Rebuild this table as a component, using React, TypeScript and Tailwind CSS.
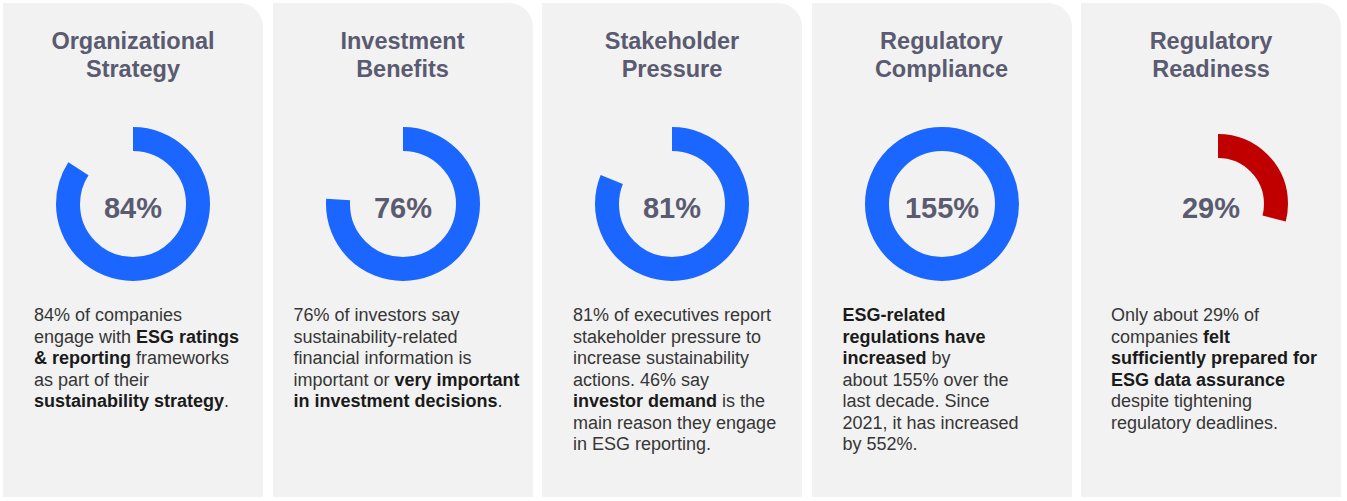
import React from 'react';

type Part = { t: string; b?: boolean };

interface Stat {
  title: [string, string];
  value: string;
  pct: number;
  color: string;
  cx: number;
  r: number;
  padLeft: string;
  lines: Part[][];
}

const stats: Stat[] = [
  {
    title: ['Organizational', 'Strategy'],
    value: '84%',
    pct: 0.84,
    color: '#1a66ff',
    cx: 80,
    r: 65,
    padLeft: 'pl-[31px]',
    lines: [
      [{ t: '84% of companies' }],
      [{ t: 'engage with ' }, { t: 'ESG ratings', b: true }],
      [{ t: '& reporting', b: true }, { t: ' frameworks' }],
      [{ t: 'as part of their' }],
      [{ t: 'sustainability strategy', b: true }, { t: '.' }],
    ],
  },
  {
    title: ['Investment', 'Benefits'],
    value: '76%',
    pct: 0.76,
    color: '#1a66ff',
    cx: 80,
    r: 65,
    padLeft: 'pl-[21px]',
    lines: [
      [{ t: '76% of investors say' }],
      [{ t: 'sustainability-related' }],
      [{ t: 'financial information is' }],
      [{ t: 'important or ' }, { t: 'very important', b: true }],
      [{ t: 'in investment decisions', b: true }, { t: '.' }],
    ],
  },
  {
    title: ['Stakeholder', 'Pressure'],
    value: '81%',
    pct: 0.81,
    color: '#1a66ff',
    cx: 80,
    r: 65,
    padLeft: 'pl-[31px]',
    lines: [
      [{ t: '81% of executives report' }],
      [{ t: 'stakeholder pressure to' }],
      [{ t: 'increase sustainability' }],
      [{ t: 'actions. 46% say' }],
      [{ t: 'investor demand', b: true }, { t: ' is the' }],
      [{ t: 'main reason they engage' }],
      [{ t: 'in ESG reporting.' }],
    ],
  },
  {
    title: ['Regulatory', 'Compliance'],
    value: '155%',
    pct: 1,
    color: '#1a66ff',
    cx: 80,
    r: 65,
    padLeft: 'pl-[31px]',
    lines: [
      [{ t: 'ESG-related', b: true }],
      [{ t: 'regulations have', b: true }],
      [{ t: 'increased', b: true }, { t: ' by' }],
      [{ t: 'about 155% over the' }],
      [{ t: 'last decade. Since' }],
      [{ t: '2021, it has increased' }],
      [{ t: 'by 552%.' }],
    ],
  },
  {
    title: ['Regulatory', 'Readiness'],
    value: '29%',
    pct: 0.29,
    color: '#c00000',
    cx: 87,
    r: 58,
    padLeft: 'pl-[30px]',
    lines: [
      [{ t: 'Only about 29% of' }],
      [{ t: 'companies ' }, { t: 'felt', b: true }],
      [{ t: 'sufficiently prepared for', b: true }],
      [{ t: 'ESG data assurance', b: true }],
      [{ t: 'despite tightening' }],
      [{ t: 'regulatory deadlines.' }],
    ],
  },
];

const Donut: React.FC<{ stat: Stat }> = ({ stat }) => {
  const c = 2 * Math.PI * stat.r;
  return (
    <svg width="160" height="160" viewBox="0 0 160 160" className="mt-[41.5px] shrink-0">
      <circle
        cx={stat.cx}
        cy={80}
        r={stat.r}
        fill="none"
        stroke={stat.color}
        strokeWidth={24}
        strokeDasharray={`${stat.pct * c} ${c}`}
        transform={`rotate(-90 ${stat.cx} 80)`}
      />
      <text
        x={80}
        y={94}
        textAnchor="middle"
        fill="#5a5b70"
        fontFamily="'Liberation Sans', Arial, sans-serif"
        fontWeight={700}
        fontSize={29}
      >
        {stat.value}
      </text>
    </svg>
  );
};

const StatCard: React.FC<{ stat: Stat }> = ({ stat }) => (
  <div className="w-[260px] h-[494px] bg-[#f2f2f2] rounded-tr-[24px] flex flex-col items-center pt-[23.5px] shrink-0">
    <h2 className="text-center text-[23.5px] leading-[28px] font-bold text-[#5a5b70]">
      {stat.title[0]}
      <br />
      {stat.title[1]}
    </h2>
    <Donut stat={stat} />
    <div className={`self-stretch mt-[21px] ${stat.padLeft} text-[18px] leading-[21.5px] text-[#363636]`}>
      {stat.lines.map((line, i) => (
        <div key={i} className="whitespace-nowrap">
          {line.map((p, j) =>
            p.b ? (
              <span key={j} className="font-bold text-[#1a1a1a]">
                {p.t}
              </span>
            ) : (
              <span key={j}>{p.t}</span>
            )
          )}
        </div>
      ))}
    </div>
  </div>
);

export default function App() {
  return (
    <div className="w-[1347px] h-[501px] bg-white flex gap-[9.5px] pl-[3px] pt-[3px] font-['Liberation_Sans',Arial,sans-serif] overflow-hidden">
      {stats.map((s) => (
        <StatCard key={s.value} stat={s} />
      ))}
    </div>
  );
}
